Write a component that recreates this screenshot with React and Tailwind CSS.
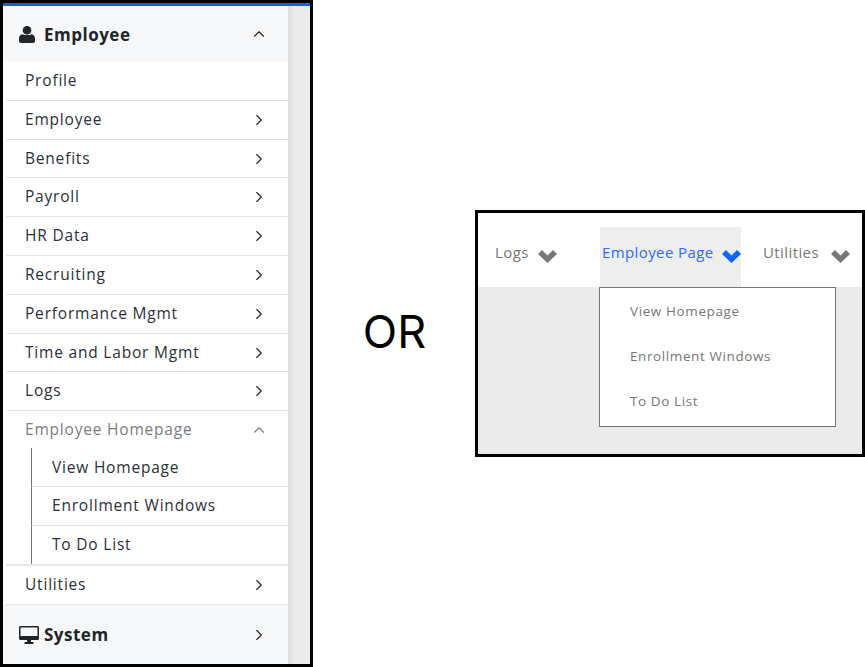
import React from "react";
import { ChevronRight, ChevronUp } from "lucide-react";

const FONT = "font-['Open_Sans','Liberation_Sans',sans-serif]";

const topItems = [
  { label: "Profile", h: "h-[39px]", noArrow: true },
  { label: "Employee", h: "h-[39px]" },
  { label: "Benefits", h: "h-[38px]" },
  { label: "Payroll", h: "h-[39px]" },
  { label: "HR Data", h: "h-[39px]" },
  { label: "Recruiting", h: "h-[39px]" },
  { label: "Performance Mgmt", h: "h-[39px]" },
  { label: "Time and Labor Mgmt", h: "h-[38px]" },
  { label: "Logs", h: "h-[39px]" },
];

const subItems = ["View Homepage", "Enrollment Windows", "To Do List"];

function UserIcon() {
  return (
    <svg width="16" height="17" viewBox="0 0 16 17" fill="#212529">
      <circle cx="8" cy="4.3" r="4.3" />
      <path d="M3.5 8.2C5 9.4 11 9.4 12.500 8.200C14.800 8.600 16 10.400 16 12.500V15C16 16.200 15.200 17 14 17H2C.8 17 0 16.200 0 15V12.500C0 10.400 1.200 8.600 3.500 8.200Z" />
    </svg>
  );
}

function MonitorIcon() {
  return (
    <svg width="20" height="18" viewBox="0 0 20 18" fill="#212529">
      <path d="M1.500 0H18.500C19.300 0 20 .7 20 1.500V12.500C20 13.300 19.300 14 18.500 14H1.500C.7 14 0 13.300 0 12.500V1.500C0 .7 .7 0 1.500 0ZM1.500 1.500V10H18.500V1.500Z" fillRule="evenodd" />
      <path d="M8 14H12V16H14.500V18H5.500V16H8Z" />
    </svg>
  );
}

function HeavyChevron({ className }) {
  return (
    <svg width="19" height="13" viewBox="0 0 19 13" fill="currentColor" className={`shrink-0 ${className || ""}`}>
      <path d="M0 4L4 0L9.500 5.500L15 0L19 4L9.500 13Z" />
    </svg>
  );
}

function Row({ label, h, noArrow }) {
  return (
    <div className={`ml-[3px] flex ${h} items-center justify-between border-b border-[#e4e4e4] pl-[19px] pr-[20px] text-[#2b303a]`}>
      <span>{label}</span>
      {!noArrow && <ChevronRight size={18} strokeWidth={1.5} className="text-[#222]" />}
    </div>
  );
}

function SideMenu() {
  return (
    <div className="h-[667px] w-[313px] shrink-0 border-[3px] border-black">
      <div className="flex h-full flex-col">
        <div className="h-[3px] bg-[#0a66d8]" />
        <div className="flex flex-1">
          <div className="flex w-[285px] flex-col bg-white text-[15.500px] tracking-[0.800px]">
            <div className="flex h-[56px] shrink-0 items-center justify-between bg-[#f7f8fa] pl-[16px] pr-[20px]">
              <div className="flex items-center gap-[9px] pt-[1px] text-[17px] font-bold tracking-[0.500px] text-[#212529]">
                <UserIcon />
                <span>Employee</span>
              </div>
              <ChevronUp size={18} strokeWidth={1.5} className="text-[#222]" />
            </div>
            {topItems.map((item) => (
              <Row key={item.label} {...item} />
            ))}
            <div className="ml-[3px] flex h-[37px] shrink-0 items-center justify-between pl-[19px] pr-[20px] text-[#7d7d7d]">
              <span>Employee Homepage</span>
              <ChevronUp size={18} strokeWidth={1.5} />
            </div>
            <div className="ml-[3px] border-b-2 border-[#e9e9e9] pl-[25px]">
              {subItems.map((item, i) => (
                <div
                  key={item}
                  className={`flex items-center border-l border-[#777] pl-5 text-[#2b303a] ${i === 0 ? "pt-[2px]" : ""} ${i < 2 ? "h-[39px] border-b border-b-[#e4e4e4]" : "h-[38px]"}`}
                >
                  {item}
                </div>
              ))}
            </div>
            <Row label="Utilities" h="h-[39px]" />
            <div className="flex flex-1 items-center justify-between bg-[#f7f8fa] pl-[16px] pr-[20px]">
              <div className="flex items-center gap-[5px] text-[17px] font-bold tracking-[0.500px] text-[#212529]">
                <MonitorIcon />
                <span>System</span>
              </div>
              <ChevronRight size={18} strokeWidth={1.5} className="text-[#222]" />
            </div>
          </div>
          <div className="flex-1 bg-gradient-to-r from-[#dddddd] to-[#ebebeb] to-30%" />
        </div>
      </div>
    </div>
  );
}

function TopNav() {
  return (
    <div className="mt-[210px] h-[247px] w-[390px] border-[3px] border-black bg-[#ebebeb]">
      <div className="flex h-[74px] whitespace-nowrap bg-white text-[15px] tracking-[0.400px] text-[#777]">
        <div className="flex w-[122px] items-center gap-[9px] pb-[9px] pl-[17px] pt-[14px]">
          <span>Logs</span>
          <HeavyChevron className="mt-[7px]" />
        </div>
        <div className="mt-[14px] flex w-[141px] items-center gap-[8px] bg-[#eeeeee] pb-[9px] pl-[2px] text-[#2f6bff]">
          <span>Employee Page</span>
          <HeavyChevron className="mt-[7px] text-[#0a66ff]" />
        </div>
        <div className="flex flex-1 items-center gap-[12px] pb-[9px] pl-[22px] pt-[14px]">
          <span>Utilities</span>
          <HeavyChevron className="mt-[7px]" />
        </div>
      </div>
      <div className="ml-[121px] flex h-[140px] w-[237px] flex-col justify-center gap-[24px] border border-[#777] bg-white pb-[2px] pl-[30px] text-[13.500px] tracking-[0.600px] text-[#777]">
        {subItems.map((item) => (
          <div key={item} className="leading-[21px]">
            {item}
          </div>
        ))}
      </div>
    </div>
  );
}

export default function App() {
  return (
    <div className={`flex h-[667px] w-[865px] bg-white ${FONT}`}>
      <SideMenu />
      <div className="flex w-[162px] shrink-0 items-start justify-center pl-[1px] pt-[298px] text-[45px] leading-[68px] text-black">
        <span className="font-['Inter',sans-serif]">OR</span>
      </div>
      <TopNav />
    </div>
  );
}
